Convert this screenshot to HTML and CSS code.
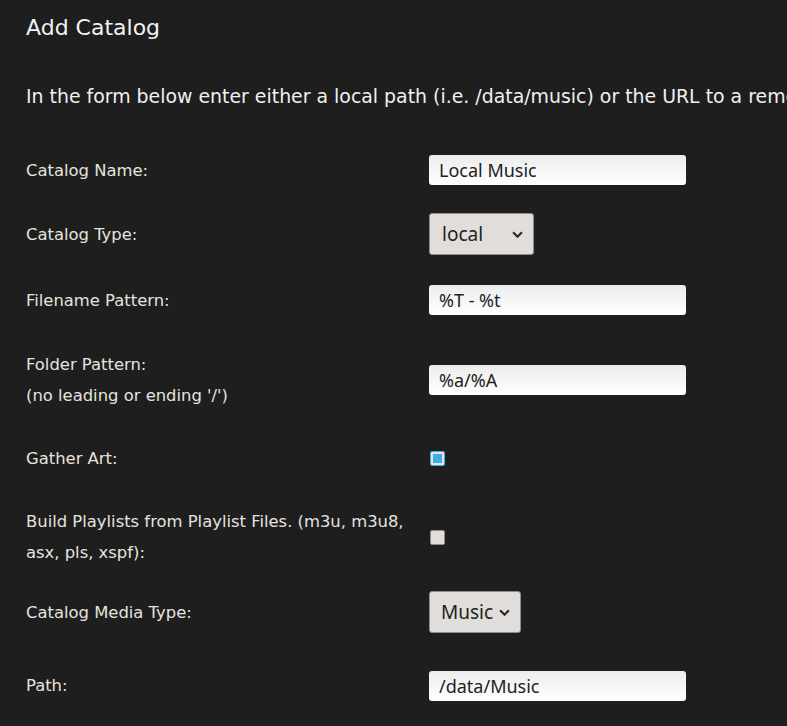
FILE: index.html
```html
<!DOCTYPE html>
<html>
<head>
<meta charset="utf-8">
<link rel="stylesheet" href="styles.css">
</head>
<body>
<div class="page">
  <h1 class="title">Add Catalog</h1>
  <p class="intro">In the form below enter either a local path (i.e. /data/music) or the URL to a remote Ampache installation (i.e http://theotherampache.com)</p>
  <form class="form">
    <div class="label">Catalog Name:</div>
    <div class="control"><input class="text" type="text" value="Local Music"></div>

    <div class="label">Catalog Type:</div>
    <div class="control"><div class="select select-type"><span>local</span><svg class="chev" viewBox="0 0 10 6"><path d="M1 1 L5 5 L9 1" /></svg></div></div>

    <div class="label">Filename Pattern:</div>
    <div class="control"><input class="text" type="text" value="%T - %t"></div>

    <div class="label">Folder Pattern:<br>(no leading or ending '/')</div>
    <div class="control"><input class="text" type="text" value="%a/%A"></div>

    <div class="label">Gather Art:</div>
    <div class="control"><span class="check checked"></span></div>

    <div class="label">Build Playlists from Playlist Files. (m3u, m3u8, asx, pls, xspf):</div>
    <div class="control"><span class="check"></span></div>

    <div class="label">Catalog Media Type:</div>
    <div class="control"><div class="select select-media"><span>Music</span><svg class="chev" viewBox="0 0 10 6"><path d="M1 1 L5 5 L9 1" /></svg></div></div>

    <div class="label">Path:</div>
    <div class="control"><input class="text" type="text" value="/data/Music"></div>
  </form>
</div>
</body>
</html>
```
FILE: styles.css
```css
html, body {
  margin: 0;
  padding: 0;
  background: #1e1e1e;
  overflow: hidden;
}
.page {
  padding: 0 0 0 26px;
  font-family: "DejaVu Sans", sans-serif;
  color: #e8e6e3;
  width: 1200px;
}
.title {
  margin: 0;
  padding-top: 13px;
  font-size: 22px;
  font-weight: normal;
  line-height: 30px;
  color: #f2f2f2;
}
.intro {
  margin: 38px 0 0 0;
  font-size: 18.9px;
  line-height: 30px;
  white-space: nowrap;
  color: #f0f0f0;
}
.form {
  display: grid;
  grid-template-columns: 403px 260px;
  grid-template-rows: 64px 64px 68px 91px 66px 92px 58px 89px;
  margin-top: 27px;
  align-items: center;
}
.label {
  font-size: 16.4px;
  line-height: 31px;
  color: #e6e3df;
}
.control {
  display: flex;
  align-items: center;
}
.text {
  box-sizing: border-box;
  width: 257px;
  height: 30px;
  border: none;
  border-radius: 3px;
  background: linear-gradient(#ececec, #ffffff);
  padding: 0 10px;
  font-family: "Noto Sans", sans-serif;
  font-size: 18px;
  color: #222;
  outline: none;
}
.select {
  box-sizing: border-box;
  height: 42px;
  border: 1px solid #8f8c89;
  border-radius: 3px;
  background: #e0ddda;
  display: flex;
  align-items: center;
  font-family: "Noto Sans", sans-serif;
  font-size: 19px;
  color: #222;
  padding-left: 12px;
}
.select-type { width: 105px; justify-content: space-between; padding-right: 10px; }
.select-media { width: 92px; gap: 6px; padding-left: 11px; }
.chev {
  width: 11px;
  height: 7px;
  fill: none;
  stroke: #2a2a2a;
  stroke-width: 2;
}
.check {
  box-sizing: border-box;
  display: block;
  margin-left: 1px;
  width: 15px;
  height: 15px;
  border: 1px solid #8f8c89;
  border-radius: 2px;
  background: #e0ddda;
}
.check.checked {
  border-color: #3daee9;
  background: #3daee9;
  box-shadow: inset 0 0 0 2px #e6e3e0;
}
```
